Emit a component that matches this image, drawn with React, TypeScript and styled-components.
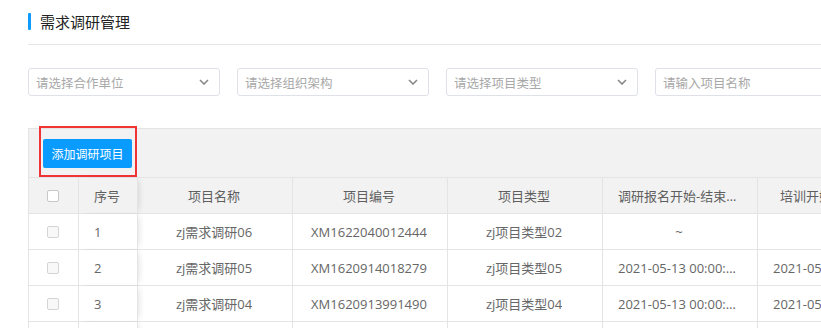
import React from "react";
import styled, { createGlobalStyle } from "styled-components";

const GlobalStyle = createGlobalStyle`
  html, body { margin: 0; padding: 0; background: #fff; }
  body { font-family: "Open Sans", "Noto Sans CJK SC", sans-serif; }
  * { box-sizing: border-box; }
`;

const Page = styled.div`
  width: 821px;
  height: 328px;
  overflow: hidden;
  padding-left: 28px;
`;

const TitleBar = styled.div`
  display: flex;
  align-items: center;
  gap: 9px;
  height: 45px;
  padding-bottom: 1px;
  border-bottom: 1px solid #e6e6e6;
  width: 900px;
`;

const Accent = styled.span`
  width: 3px;
  height: 17px;
  background: #0d9bff;
  border-radius: 1px;
`;

const Title = styled.h1`
  margin: 0;
  font-size: 15px;
  font-weight: 400;
  color: #222;
  line-height: 20px;
`;

const Filters = styled.div`
  display: flex;
  gap: 17px;
  margin-top: 23px;
  flex-wrap: nowrap;
`;

const Field = styled.div`
  flex: 0 0 192px;
  height: 28px;
  border: 1px solid #dfe1e8;
  border-radius: 3px;
  display: flex;
  align-items: center;
  justify-content: space-between;
  padding: 0 10px 0 7px;
  font-size: 12.5px;
  color: #a8a8a8;
`;

const Chevron = () => (
  <svg width="10" height="6" viewBox="0 0 10 6">
    <path d="M1 1 L5 5 L9 1" fill="none" stroke="#888" strokeWidth="1.6" />
  </svg>
);

const Panel = styled.div`
  margin-top: 32px;
  width: 900px;
  border-left: 1px solid #e4e4e4;
`;

const Toolbar = styled.div`
  background: #f2f2f2;
  border-top: 1px solid #e4e4e4;
  padding: 10px 0 9px 14px;
`;

const ButtonWrap = styled.div`
  position: relative;
  display: inline-block;
`;

const Button = styled.button`
  display: block;
  height: 29px;
  width: 89px;
  border: none;
  border-radius: 2px;
  background: #0a9bff;
  color: #fff;
  font-family: inherit;
  font-size: 12px;
  padding: 0;
  cursor: pointer;
`;

const Highlight = styled.span`
  position: absolute;
  top: -13px;
  left: -4px;
  width: 98px;
  height: 51px;
  border: 2px solid #f03434;
  pointer-events: none;
`;

const Row = styled.div<{ $head?: boolean }>`
  display: grid;
  grid-template-columns: 50px 59px 155px 155px 155px 155px 155px;
  height: 36px;
  border-top: 1px solid #e4e4e4;
  background: ${(p) => (p.$head ? "#f2f2f2" : "#fff")};
  color: ${(p) => (p.$head ? "#5f5f5f" : "#666")};
  font-size: 13px;
`;

const Cell = styled.div<{ $align?: "left" | "center"; $shadow?: boolean }>`
  display: flex;
  align-items: center;
  justify-content: ${(p) => (p.$align === "left" ? "flex-start" : "center")};
  padding: 0 17px 0 15px;
  border-right: 1px solid #e4e4e4;
  white-space: nowrap;
  overflow: hidden;
  position: relative;
  background: inherit;
  ${(p) =>
    p.$shadow
      ? `z-index: 1; box-shadow: 4px 0 6px -3px rgba(0,0,0,0.12);`
      : ""}
`;

const CellText = styled.span`
  overflow: hidden;
  text-overflow: ellipsis;
  white-space: nowrap;
`;

const Check = styled.span<{ $head?: boolean }>`
  width: 12px;
  height: 12px;
  border: 1px solid ${(p) => (p.$head ? "#c8c8c8" : "#d4d4d4")};
  border-radius: 2px;
  background: ${(p) => (p.$head ? "#fff" : "#f8f8f8")};
`;

const headers = ["项目名称", "项目编号", "项目类型", "调研报名开始-结束时间", "培训开始-结束时间"];

const rows = [
  ["1", "zj需求调研06", "XM1622040012444", "zj项目类型02", "~", ""],
  ["2", "zj需求调研05", "XM1620914018279", "zj项目类型05", "2021-05-13 00:00:00~2021-05-20 00:00:00", "2021-05-13 00:00:00~2021-05-20 00:00:00"],
  ["3", "zj需求调研04", "XM1620913991490", "zj项目类型04", "2021-05-13 00:00:00~2021-05-20 00:00:00", "2021-05-13 00:00:00~2021-05-20 00:00:00"],
  ["4", "zj需求调研03", "XM1620913951234", "zj项目类型03", "", ""],
];

export default function App() {
  return (
    <>
      <GlobalStyle />
      <Page>
        <TitleBar>
          <Accent />
          <Title>需求调研管理</Title>
        </TitleBar>
        <Filters>
          <Field>请选择合作单位<Chevron /></Field>
          <Field>请选择组织架构<Chevron /></Field>
          <Field>请选择项目类型<Chevron /></Field>
          <Field>请输入项目名称</Field>
        </Filters>
        <Panel>
          <Toolbar>
            <ButtonWrap>
              <Button>添加调研项目</Button>
              <Highlight />
            </ButtonWrap>
          </Toolbar>
          <Row $head>
            <Cell><Check $head /></Cell>
            <Cell $shadow>序号</Cell>
            {headers.map((h) => (
              <Cell key={h}><CellText>{h}</CellText></Cell>
            ))}
          </Row>
          {rows.map((r) => (
            <Row key={r[0]}>
              <Cell><Check /></Cell>
              <Cell $align="left" $shadow>{r[0]}</Cell>
              {r.slice(1).map((v, i) => (
                <Cell key={i}><CellText>{v}</CellText></Cell>
              ))}
            </Row>
          ))}
        </Panel>
      </Page>
    </>
  );
}
